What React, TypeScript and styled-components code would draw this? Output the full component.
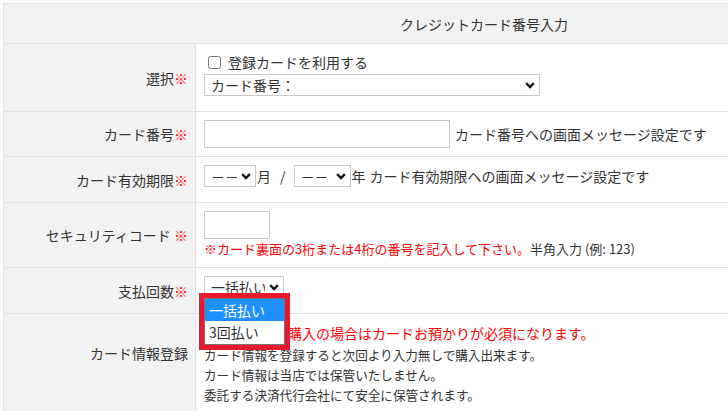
import styled, { createGlobalStyle } from 'styled-components'

const GlobalStyle = createGlobalStyle`
  html, body {
    margin: 0;
    padding: 0;
    background: #fff;
    overflow: hidden;
  }
  body {
    font-family: "Noto Sans CJK JP", "Noto Sans", sans-serif;
    font-size: 14px;
    color: #333;
  }
`

const Page = styled.div`
  padding: 3px;
`

const Form = styled.div`
  width: 960px;
  border: 1px solid #e1e1e1;
`

const Header = styled.div`
  height: 39px;
  background: #f2f2f2;
  border-bottom: 1px solid #e1e1e1;
  display: flex;
  align-items: center;
  justify-content: center;
  font-size: 14px;
  color: #333;
`

const Row = styled.div`
  display: flex;
  border-bottom: 1px solid #e1e1e1;
`

const Label = styled.div<{ $top?: number }>`
  width: 192px;
  flex-shrink: 0;
  box-sizing: border-box;
  background: #f2f2f2;
  border-right: 1px solid #e1e1e1;
  padding: ${(p) => (p.$top != null ? `${p.$top}px` : '0')} 7px 0 0;
  display: flex;
  justify-content: flex-end;
  align-items: ${(p) => (p.$top != null ? 'flex-start' : 'center')};
  line-height: 20px;
  font-size: 14px;
  color: #333;
  white-space: nowrap;
`

const Req = styled.span`
  color: #ff0000;
`

const Value = styled.div`
  flex: 1;
  padding: 8px;
  display: flex;
  flex-direction: column;
  align-items: flex-start;
`

const CheckLine = styled.label`
  height: 20px;
  margin-bottom: 2px;
  display: flex;
  align-items: center;
  line-height: 20px;
`

const CheckBox = styled.input`
  width: 13px;
  height: 13px;
  margin: 0 7px 0 4px;
`

const Line = styled.div<{ $h?: number; $center?: boolean }>`
  display: flex;
  align-items: ${(p) => (p.$center ? 'center' : 'flex-start')};
  height: ${(p) => p.$h ?? 29}px;
  line-height: 22px;
  white-space: nowrap;
`

const SelectWrap = styled.span<{ $w: number }>`
  position: relative;
  display: inline-block;
  flex-shrink: 0;
  width: ${(p) => p.$w}px;
  height: 22px;
`

const NativeSelect = styled.select`
  appearance: none;
  -webkit-appearance: none;
  box-sizing: border-box;
  width: 100%;
  height: 100%;
  margin: 0;
  padding: 0 18px 0 6px;
  border: 1px solid #c9c9c9;
  border-radius: 0;
  background: #fff;
  font-family: inherit;
  font-size: 14px;
  color: #333;
  outline: none;
`

const Chevron = styled.svg`
  position: absolute;
  right: 5px;
  top: 8px;
  width: 10px;
  height: 7px;
  pointer-events: none;
`

const TextInput = styled.input<{ $w: number }>`
  box-sizing: border-box;
  width: ${(p) => p.$w}px;
  height: 28px;
  margin: 0;
  border: 1px solid #c9c9c9;
  border-radius: 0;
  background: #fff;
  flex-shrink: 0;
`

const Msg = styled.span<{ $gap?: number }>`
  margin-left: ${(p) => p.$gap ?? 0}px;
  font-size: 14px;
  color: #333;
`

const Slash = styled.span`
  margin: 0 8px 0 9px;
  color: #333;
`

const Note = styled.div`
  height: 20px;
  line-height: 20px;
  font-size: 13px;
  white-space: nowrap;
`

const RedText = styled.span`
  color: #ff0000;
`

const Warn = styled.div`
  height: 23px;
  line-height: 23px;
  font-size: 14px;
  color: #ff0000;
  white-space: nowrap;
`

const Info = styled.div`
  height: 20px;
  line-height: 20px;
  font-size: 12.6px;
  color: #333;
  white-space: nowrap;
`

const Frame = styled.div`
  position: absolute;
  left: -5px;
  top: 17px;
  z-index: 5;
  border: 5px solid #e8192c;
`

const OptionList = styled.div`
  width: 81px;
  box-sizing: border-box;
  border: 1px solid #767676;
  background: #fff;
  padding-bottom: 1px;
`

const Option = styled.div<{ $active?: boolean }>`
  height: 22px;
  line-height: 22px;
  padding-left: 4px;
  font-size: 14px;
  background: ${(p) => (p.$active ? '#1e90ff' : '#fff')};
  color: ${(p) => (p.$active ? '#fff' : '#333')};
  white-space: nowrap;
`

const Select = ({ width, value, children }: { width: number; value: string; children?: React.ReactNode }) => (
  <SelectWrap $w={width}>
    <NativeSelect defaultValue={value}>
      <option value={value}>{value}</option>
    </NativeSelect>
    <Chevron viewBox="0 0 10 7">
      <path d="M1.2 1.2 L5 5 L8.8 1.2" fill="none" stroke="#111" strokeWidth="2.4" />
    </Chevron>
    {children}
  </SelectWrap>
)

const App = () => {
  return (
    <Page>
      <GlobalStyle />
      <Form>
        <Header>クレジットカード番号入力</Header>

        <Row>
          <Label>
            選択<Req>※</Req>
          </Label>
          <Value>
            <CheckLine>
              <CheckBox type="checkbox" />
              登録カードを利用する
            </CheckLine>
            <Line>
              <Select width={336} value="カード番号：" />
            </Line>
          </Value>
        </Row>

        <Row>
          <Label>
            カード番号<Req>※</Req>
          </Label>
          <Value>
            <Line $h={28} $center>
              <TextInput type="text" $w={246} />
              <Msg $gap={5}>カード番号への画面メッセージ設定です</Msg>
            </Line>
          </Value>
        </Row>

        <Row>
          <Label>
            カード有効期限<Req>※</Req>
          </Label>
          <Value>
            <Line>
              <Select width={52} value="－－" />
              <Msg $gap={1}>月</Msg>
              <Slash>/</Slash>
              <Select width={57} value="－－" />
              <Msg $gap={1}>年</Msg>
              <Msg $gap={4}>カード有効期限への画面メッセージ設定です</Msg>
            </Line>
          </Value>
        </Row>

        <Row>
          <Label>
            セキュリティコード&nbsp;<Req>※</Req>
          </Label>
          <Value>
            <TextInput type="text" $w={66} />
            <Note>
              <RedText>※カード裏面の3桁または4桁の番号を記入して下さい。</RedText>
              半角入力 (例: 123)
            </Note>
          </Value>
        </Row>

        <Row>
          <Label>
            支払回数<Req>※</Req>
          </Label>
          <Value>
            <Line>
              <Select width={80} value="一括払い">
                <Frame>
                  <OptionList>
                    <Option $active>一括払い</Option>
                    <Option>3回払い</Option>
                  </OptionList>
                </Frame>
              </Select>
            </Line>
          </Value>
        </Row>

        <Row>
          <Label $top={29}>カード情報登録</Label>
          <Value>
            <Warn>定期商品のご購入の場合はカードお預かりが必須になります。</Warn>
            <Info>カード情報を登録すると次回より入力無しで購入出来ます。</Info>
            <Info>カード情報は当店では保管いたしません。</Info>
            <Info>委託する決済代行会社にて安全に保管されます。</Info>
          </Value>
        </Row>
      </Form>
    </Page>
  )
}

export default App
